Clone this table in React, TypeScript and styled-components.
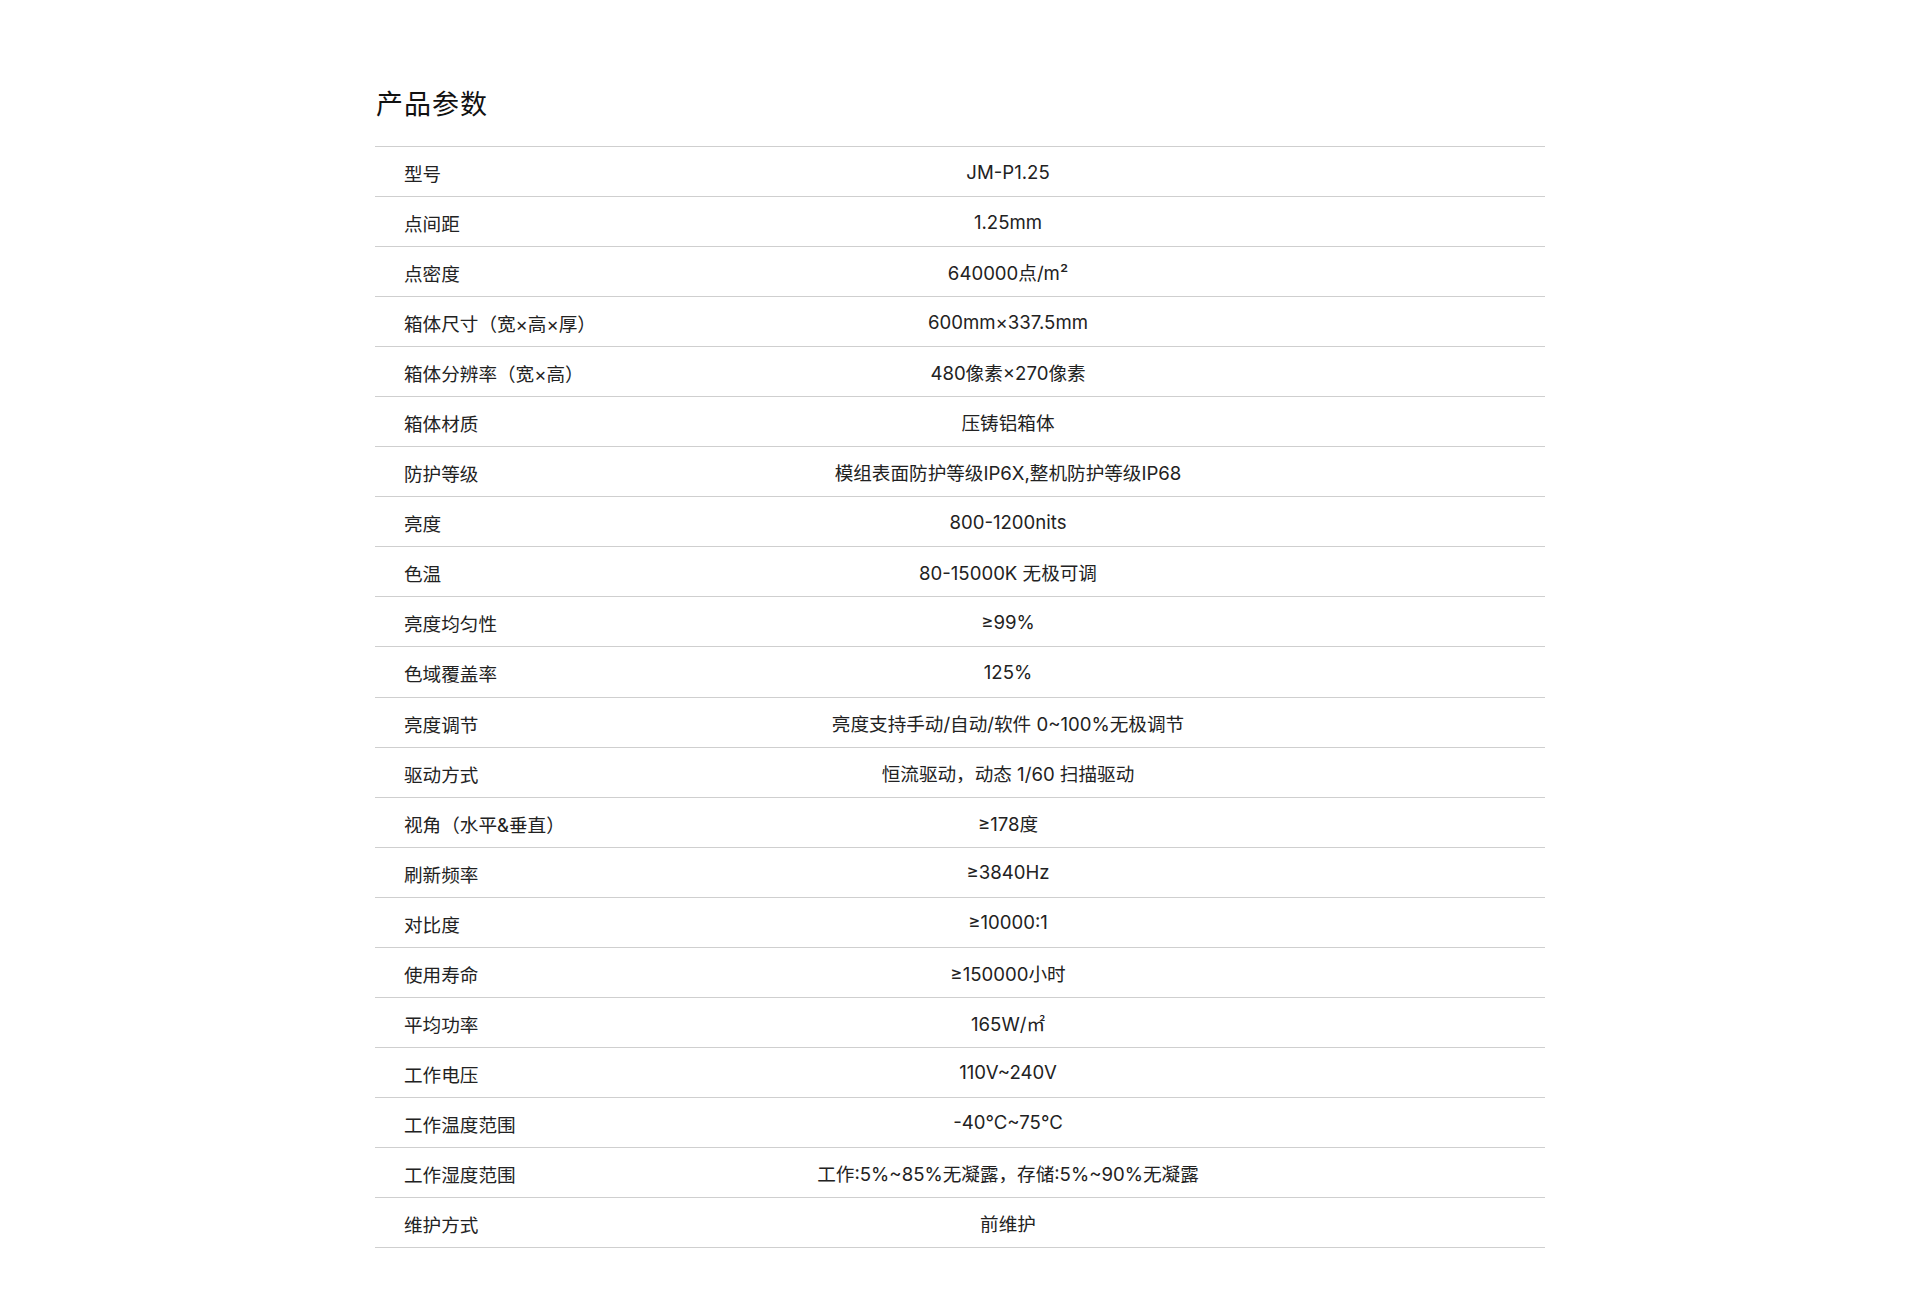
import React from 'react';
import styled, { createGlobalStyle } from 'styled-components';

const GlobalStyle = createGlobalStyle`
  html, body {
    margin: 0;
    padding: 0;
    background: #ffffff;
  }
  body {
    font-family: Inter, "Noto Sans CJK SC", "Noto Sans", sans-serif;
    color: #1f1f1f;
  }
`;

const specs: [string, string][] = [
  ['型号', 'JM-P1.25'],
  ['点间距', '1.25mm'],
  ['点密度', '640000点/m²'],
  ['箱体尺寸（宽×高×厚）', '600mm×337.5mm'],
  ['箱体分辨率（宽×高）', '480像素×270像素'],
  ['箱体材质', '压铸铝箱体'],
  ['防护等级', '模组表面防护等级IP6X,整机防护等级IP68'],
  ['亮度', '800-1200nits'],
  ['色温', '80-15000K 无极可调'],
  ['亮度均匀性', '≥99%'],
  ['色域覆盖率', '125%'],
  ['亮度调节', '亮度支持手动/自动/软件 0~100%无极调节'],
  ['驱动方式', '恒流驱动，动态 1/60 扫描驱动'],
  ['视角（水平&垂直）', '≥178度'],
  ['刷新频率', '≥3840Hz'],
  ['对比度', '≥10000:1'],
  ['使用寿命', '≥150000小时'],
  ['平均功率', '165W/㎡'],
  ['工作电压', '110V~240V'],
  ['工作温度范围', '-40℃~75℃'],
  ['工作湿度范围', '工作:5%~85%无凝露，存储:5%~90%无凝露'],
  ['维护方式', '前维护'],
];

export default function App() {
  return (
    <>
      <GlobalStyle />
      <Page>
        <Section>
          <Title>产品参数</Title>
          <SpecTable>
            {specs.map(([label, value]) => (
              <SpecRow key={label}>
                <Label>{label}</Label>
                <Value>{value}</Value>
              </SpecRow>
            ))}
          </SpecTable>
        </Section>
      </Page>
    </>
  );
}

const Page = styled.div`
  width: 100%;
  min-height: 1304px;
  display: flex;
  justify-content: center;
  padding-top: 85px;
  box-sizing: border-box;
`;

const Section = styled.section`
  width: 1170px;
`;

const Title = styled.h2`
  margin: 0 0 21px 1px;
  font-size: 27px;
  line-height: 40px;
  font-weight: 400;
  color: #111111;
  letter-spacing: 1px;
`;

const SpecTable = styled.div`
  border-top: 1px solid #cfcfcf;
`;

const SpecRow = styled.div`
  display: grid;
  grid-template-columns: 330px 606px;
  align-items: center;
  height: 50.05px;
  box-sizing: border-box;
  border-bottom: 1px solid #cfcfcf;
  font-size: 18.6px;
  color: #222222;
`;

const Label = styled.div`
  padding-left: 29px;
  padding-top: 2px;
  white-space: nowrap;
`;

const Value = styled.div`
  text-align: center;
  white-space: nowrap;
`;
